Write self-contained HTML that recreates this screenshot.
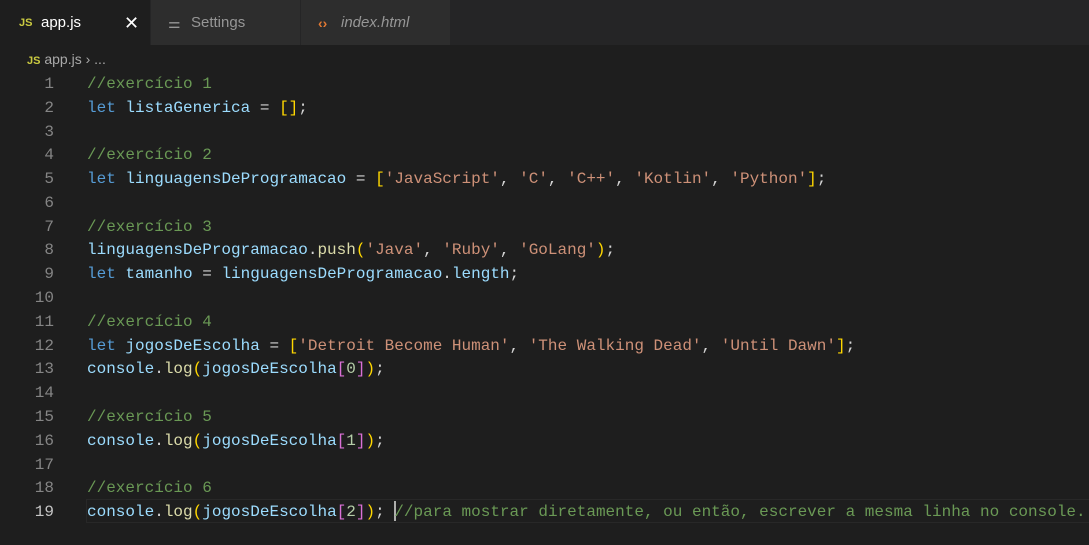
<!DOCTYPE html><html><head><meta charset="utf-8"><style>
body{margin:0;width:1089px;height:545px;background:#1e1e1e;overflow:hidden;font-family:"Liberation Sans",sans-serif}
.tabs{position:absolute;left:0;top:0;width:1089px;height:45px;background:#252526}
.tab{position:absolute;top:0;height:45px;width:149px;background:#2d2d2d;color:#969696;font-size:15px;line-height:46px}
.bc{position:absolute;top:51px;left:27px;color:#a9a9a9;font-size:14px}
.code{position:absolute;left:0;top:73px;font-family:"Liberation Mono",monospace;font-size:16px;line-height:23.78px;color:#d4d4d4}
.ln{position:absolute;left:0;top:0;width:54px;text-align:right;color:#858585;white-space:pre}
.tx{position:absolute;left:87px;top:0;white-space:pre}
.c{color:#6a9955}.k{color:#569cd6}.v{color:#9cdcfe}.s{color:#ce9178}.f{color:#dcdcaa}.y{color:#ffd700}.p{color:#da70d6}.n{color:#b5cea8}
</style></head><body>
<div class="tabs">
<div class="tab" style="left:0;width:150px;background:#1e1e1e;color:#fff"><span style="position:absolute;left:19px;top:0;color:#cbcb41;font-size:11px;font-weight:bold">JS</span><span style="position:absolute;left:41px">app.js</span><span style="position:absolute;left:124px;font-size:18px">✕</span></div>
<div class="tab" style="left:151px"><span style="position:absolute;left:17px;font-size:14px">⚌</span><span style="position:absolute;left:40px">Settings</span></div>
<div class="tab" style="left:301px"><span style="position:absolute;left:17px;color:#e37933;font-weight:bold;font-size:14px">‹›</span><span style="position:absolute;left:40px;font-style:italic">index.html</span></div>
</div>
<div class="bc"><span style="color:#cbcb41;font-size:11px;font-weight:bold">JS</span> app.js › ...</div>
<div style="position:absolute;left:86px;top:499px;width:1003px;height:24px;border:1px solid #282828;border-right:none;box-sizing:border-box"></div>
<div style="position:absolute;left:394px;top:501px;width:2px;height:20px;background:#aeafad"></div>
<div class="code"><div class="ln"> 1
 2
 3
 4
 5
 6
 7
 8
 9
10
11
12
13
14
15
16
17
18
<span style="color:#c6c6c6">19</span></div><div class="tx"><span class="c">//exercício 1</span>
<span class="k">let</span> <span class="v">listaGenerica</span> = <span class="y">[]</span>;

<span class="c">//exercício 2</span>
<span class="k">let</span> <span class="v">linguagensDeProgramacao</span> = <span class="y">[</span><span class="s">'JavaScript'</span>, <span class="s">'C'</span>, <span class="s">'C++'</span>, <span class="s">'Kotlin'</span>, <span class="s">'Python'</span><span class="y">]</span>;

<span class="c">//exercício 3</span>
<span class="v">linguagensDeProgramacao</span>.<span class="f">push</span><span class="y">(</span><span class="s">'Java'</span>, <span class="s">'Ruby'</span>, <span class="s">'GoLang'</span><span class="y">)</span>;
<span class="k">let</span> <span class="v">tamanho</span> = <span class="v">linguagensDeProgramacao</span>.<span class="v">length</span>;

<span class="c">//exercício 4</span>
<span class="k">let</span> <span class="v">jogosDeEscolha</span> = <span class="y">[</span><span class="s">'Detroit Become Human'</span>, <span class="s">'The Walking Dead'</span>, <span class="s">'Until Dawn'</span><span class="y">]</span>;
<span class="v">console</span>.<span class="f">log</span><span class="y">(</span><span class="v">jogosDeEscolha</span><span class="p">[</span><span class="n">0</span><span class="p">]</span><span class="y">)</span>;

<span class="c">//exercício 5</span>
<span class="v">console</span>.<span class="f">log</span><span class="y">(</span><span class="v">jogosDeEscolha</span><span class="p">[</span><span class="n">1</span><span class="p">]</span><span class="y">)</span>;

<span class="c">//exercício 6</span>
<span class="v">console</span>.<span class="f">log</span><span class="y">(</span><span class="v">jogosDeEscolha</span><span class="p">[</span><span class="n">2</span><span class="p">]</span><span class="y">)</span>; <span class="c">//para mostrar diretamente, ou então, escrever a mesma linha no console.</span></div></div>
</body></html>
